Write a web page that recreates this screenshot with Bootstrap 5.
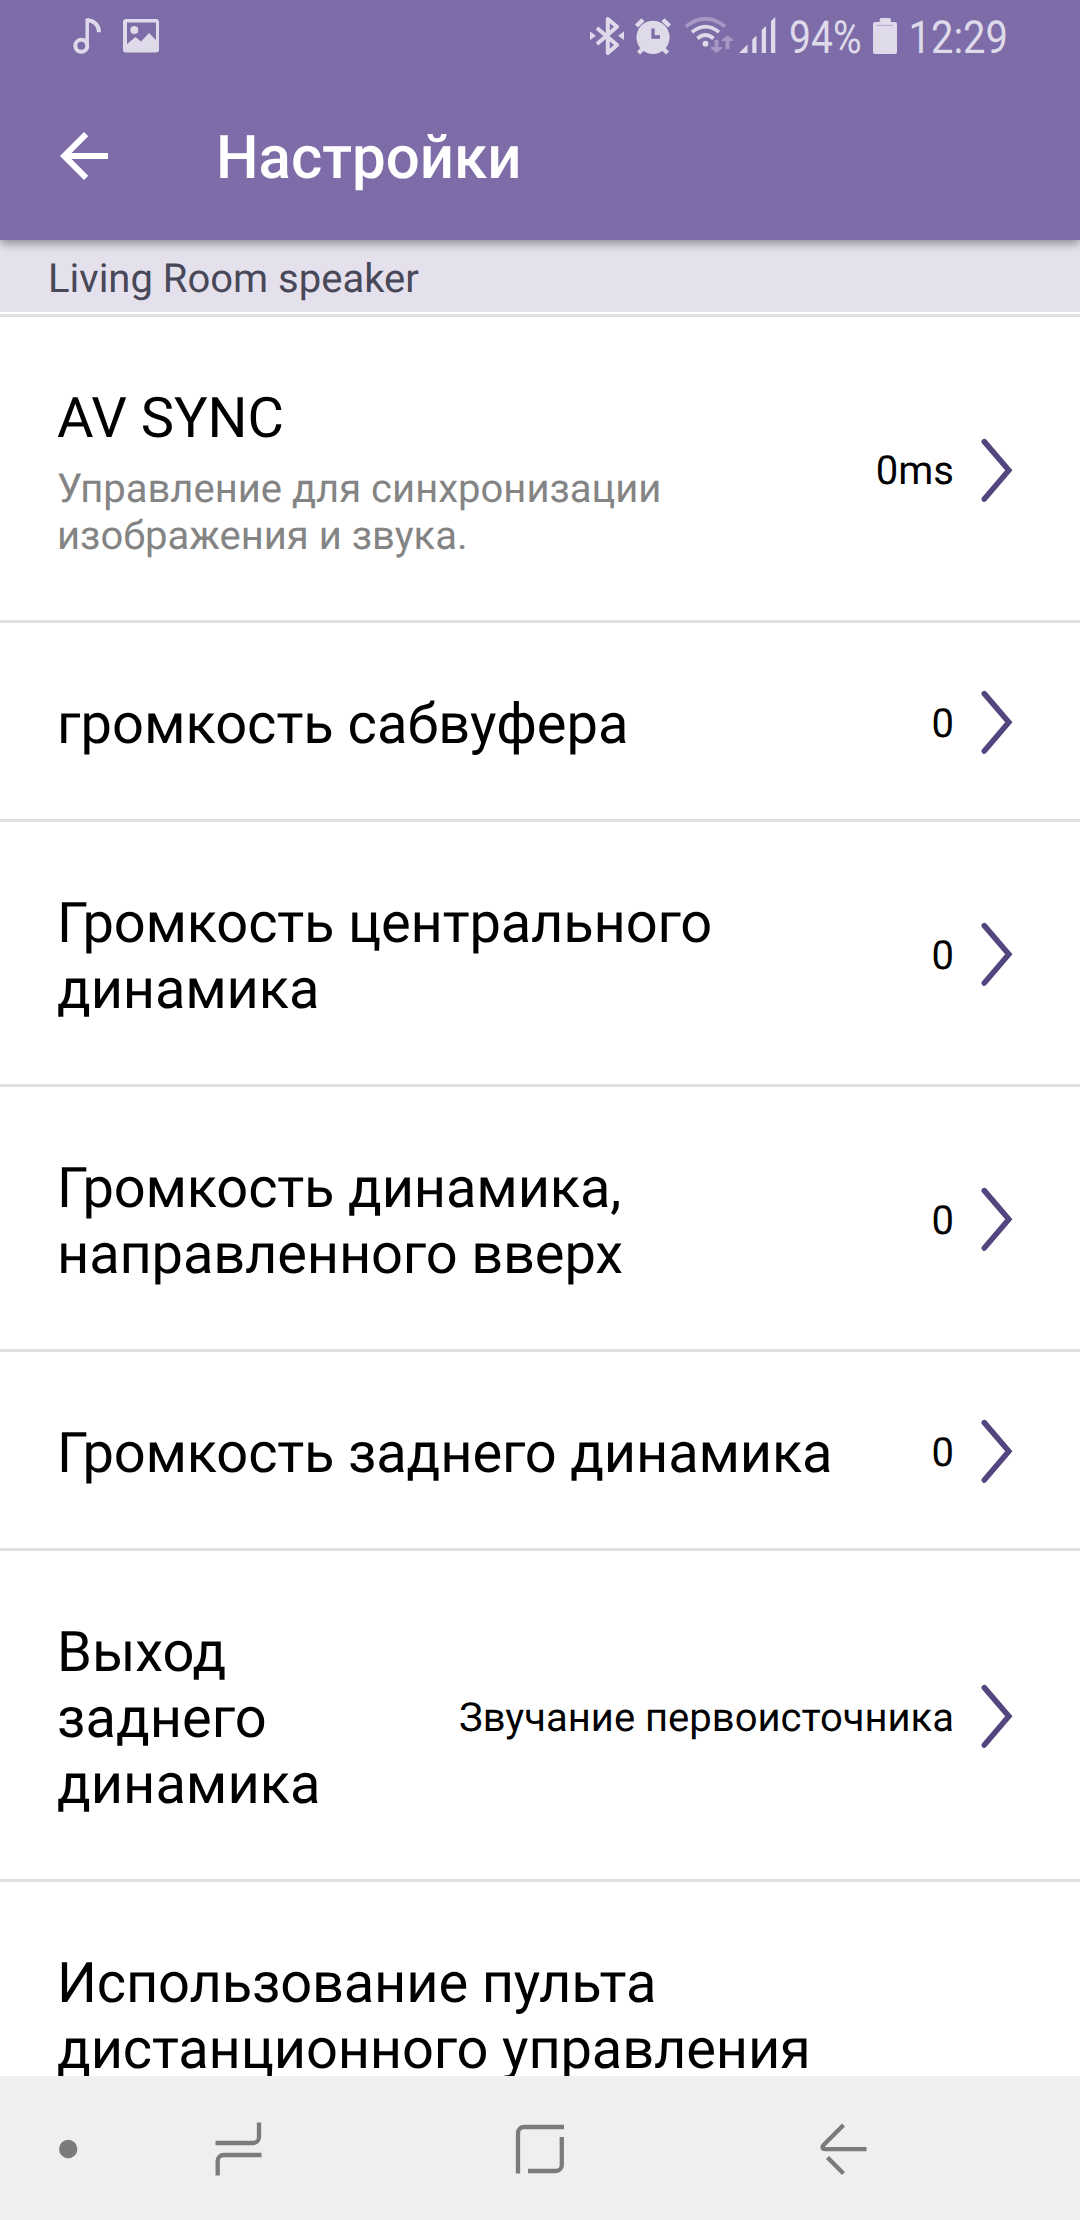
<!DOCTYPE html>
<html lang="ru">
<head>
<meta charset="utf-8">
<meta name="viewport" content="width=device-width, initial-scale=1">
<title>Настройки</title>
<link href="https://cdn.jsdelivr.net/npm/bootstrap@5.3.0/dist/css/bootstrap.min.css" rel="stylesheet">
<style>
  body { font-family: Roboto, "Noto Sans", sans-serif; color: #000; background: #fff; text-rendering: geometricPrecision; }
  .screen { width: 1080px; height: 2220px; }
  .app-top { height: 240px; background: #7d6ca7; box-shadow: 0 4px 9px rgba(0,0,0,.36); z-index: 2; }
  .status-strip { height: 72px; }
  .status-strip svg { fill: #dedaea; }
  .app-bar { height: 168px; padding-left: 60px; }
  .back-link { width: 48px; height: 48px; }
  .app-title { font-size: 60px; font-weight: 500; line-height: 70px; margin: 4px 0 0 108px; color: #fff; }
  .device-name { height: 72px; padding-left: 48px; font-size: 40px; line-height: 77px; background: #e4e1ed; color: #494858; }
  .settings-list { margin-top: 2px; border-top: 3px solid #e0e0e0; }
  .setting { border-bottom: 3px solid #e0e0e0; padding: 66px 67px 64px 57px; }
  .setting-title { font-size: 56px; line-height: 66px; margin: 2px 0 -2px; }
  .title-long { letter-spacing: -.16px; }
  .setting-note { font-size: 40px; line-height: 47px; margin: 16px 0 -3px; color: #848484; }
  .setting-value { font-size: 40px; line-height: 47px; margin: 2px 27px 0 0; }
  .chevron { width: 32px; height: 66px; }
  .nav-keys { height: 144px; background: #efefef; }
</style>
</head>
<body>
<div class="screen d-flex flex-column overflow-hidden">
  <header class="app-top position-relative flex-shrink-0">
    <div class="status-strip d-flex justify-content-between">
      <svg width="200" height="72" viewBox="0 0 200 72">
        <g fill="none" stroke="#dedaea" stroke-width="4">
          <circle cx="81.3" cy="45.8" r="6"/>
          <path d="M87.2 46V18.5" stroke-width="3.5"/>
          <path d="M87 20.3C94 20.3 99 25 99 32.3"/>
        </g>
        <path fill-rule="evenodd" d="M126 19h30q3 0 3 3v27.500q0 3-3 3h-30q-3 0-3-3V22q0-3 3-3ZM127 22.500V44l8.500-7 5.500 4.500L149 33l7 7V22.500Z"/>
        <circle cx="134.300" cy="30" r="4"/>
      </svg>
      <svg width="520" height="72" viewBox="560 0 520 72">
        <path d="M597 44 617 26.800 607.800 19V53L617 45 597 28" fill="none" stroke="#dedaea" stroke-width="4" stroke-linejoin="round"/>
        <path d="M590 31.500 596 35.800 590 40ZM624 31.500 618 35.800 624 40Z"/>
        <circle cx="653" cy="37.300" r="16.600"/>
        <path d="M636.500 26 643 19.700M663 19.700 669.500 26M638.500 53 644 47.500M667.500 53 662 47.500" fill="none" stroke="#dedaea" stroke-width="4.300"/>
        <path d="M653 28.500V37H660" fill="none" stroke="#7d6ca7" stroke-width="3.300"/>
        <g fill="none" stroke="#dedaea" stroke-width="3.700">
          <path d="M697.500 38.500Q705.500 31.500 713.500 38.500M692 32.200Q705.500 21 719 32.200"/>
          <path d="M686 26.500Q705.500 11 725 26.500" stroke="#a598c5"/>
        </g>
        <circle cx="705.500" cy="43.700" r="2.900"/>
        <path d="M714.500 40h4v7h3.500v1.500l-5.500 4.500-5.500-4.500V47h3.500ZM725.500 49h4v-8h3.500v-1.500l-5.500-4-5.500 4V41h3.500Z" fill="#a598c5"/>
        <path d="M739 53 747.500 44.500V53ZM752.300 53V39.500L756.500 35.500V53ZM761.700 53V30L766 26V53ZM771 53V21L775.300 17V53Z"/>
        <text x="789" y="53" font-size="45.500" textLength="72.500" lengthAdjust="spacingAndGlyphs">94%</text>
        <path d="M879.700 22v-2.500q0-1.500 1.500-1.500h8.200q1.500 0 1.500 1.500V22h4.100q2 0 2 2v28q0 2-2 2h-20q-2 0-2-2V24q0-2 2-2Z"/>
        <path d="M876.800 25.400H893.200" stroke="#b3a9cd"/>
        <text x="908.500" y="53" font-size="45.500" textLength="99.500" lengthAdjust="spacingAndGlyphs">12:29</text>
      </svg>
    </div>
    <div class="app-bar d-flex align-items-center">
      <a class="back-link d-flex" href="#" aria-label="Назад">
        <svg width="48" height="48" viewBox="4 4 16 16" fill="#fff"><path d="M20 11H7.830l5.590-5.590L12 4l-8 8 8 8 1.410-1.410L7.830 13H20Z"/></svg>
      </a>
      <h1 class="app-title">Настройки</h1>
    </div>
  </header>
  <div class="device-name flex-shrink-0">Living Room speaker</div>

  <svg class="d-none"><symbol id="chev" viewBox="0 0 32 66"><path d="M3.300 4.600 27.800 33.300 3.300 62" fill="none" stroke="#53467f" stroke-width="5.600" stroke-linecap="round"/></symbol></svg>

  <main class="settings-list flex-grow-1 overflow-hidden">
    <div class="setting d-flex align-items-center">
      <div class="flex-grow-1">
        <div class="setting-title">AV SYNC</div>
        <div class="setting-note">Управление для синхронизации<br>изображения и звука.</div>
      </div>
      <div class="setting-value">0ms</div><svg class="chevron"><use href="#chev"/></svg>
    </div>
    <div class="setting d-flex align-items-center">
      <div class="setting-title flex-grow-1">громкость сабвуфера</div>
      <div class="setting-value">0</div><svg class="chevron"><use href="#chev"/></svg>
    </div>
    <div class="setting d-flex align-items-center">
      <div class="setting-title title-long flex-grow-1">Громкость центрального<br>динамика</div>
      <div class="setting-value">0</div><svg class="chevron"><use href="#chev"/></svg>
    </div>
    <div class="setting d-flex align-items-center">
      <div class="setting-title title-long flex-grow-1">Громкость динамика,<br>направленного вверх</div>
      <div class="setting-value">0</div><svg class="chevron"><use href="#chev"/></svg>
    </div>
    <div class="setting d-flex align-items-center">
      <div class="setting-title title-long flex-grow-1">Громкость заднего динамика</div>
      <div class="setting-value">0</div><svg class="chevron"><use href="#chev"/></svg>
    </div>
    <div class="setting d-flex align-items-center">
      <div class="setting-title flex-grow-1">Выход<br>заднего<br>динамика</div>
      <div class="setting-value">Звучание первоисточника</div><svg class="chevron"><use href="#chev"/></svg>
    </div>
    <div class="setting d-flex">
      <div class="setting-title title-long">Использование пульта<br>дистанционного управления</div>
    </div>
  </main>

  <nav class="nav-keys flex-shrink-0">
    <svg class="d-block" width="1080" height="144" viewBox="0 2076 1080 144" fill="none" stroke="#7b7b7b" stroke-width="4.300">
      <circle cx="68.200" cy="2149" r="9.200" fill="#7b7b7b" stroke="none"/>
      <path d="M215.500 2143H253a6 6 0 0 0 6-6V2122.500M217.700 2175.500V2161a6 6 0 0 1 6-6H261.500"/>
      <path d="M518 2173.500V2133a6 6 0 0 1 6-6H564M561.800 2137V2165a6 6 0 0 1-6 6H528"/>
      <path d="M866.500 2149.200H825C822.500 2149.200 821.500 2147 823.300 2145.200L843.500 2125M827.500 2157.500 843.500 2173.500"/>
    </svg>
  </nav>
</div>
<script src="https://cdn.jsdelivr.net/npm/bootstrap@5.3.0/dist/js/bootstrap.bundle.min.js"></script>
</body>
</html>
